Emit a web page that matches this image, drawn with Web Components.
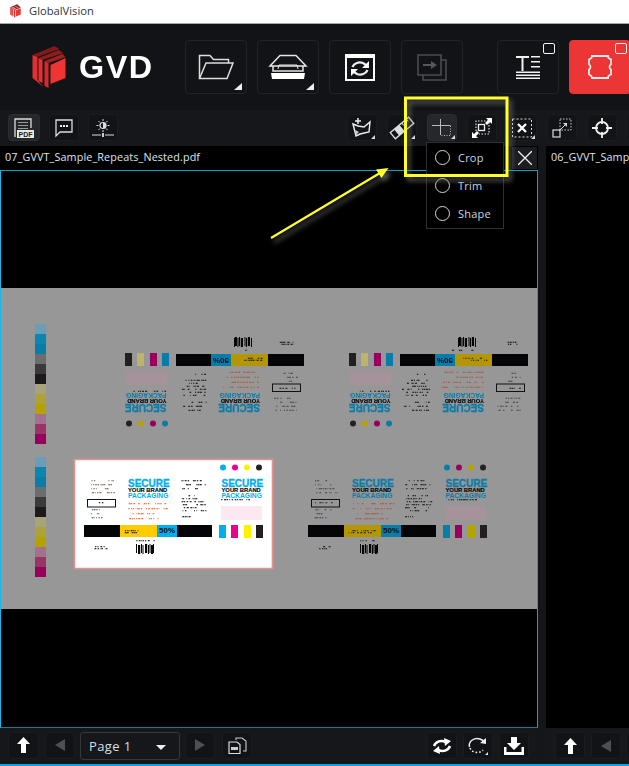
<!DOCTYPE html>
<html>
<head>
<meta charset="utf-8">
<title>GlobalVision</title>
<style>
  html, body { margin: 0; padding: 0; background: #111316; }
  body { width: 629px; height: 766px; overflow: hidden; position: relative; font-family: "Open Sans", "Liberation Sans", sans-serif; }
</style>
</head>
<body>
<gv-title-bar>GlobalVision</gv-title-bar>

<gv-main-bar>
  <gv-tool-button big icon="folder" corner></gv-tool-button>
  <gv-tool-button big icon="scanner" corner></gv-tool-button>
  <gv-tool-button big icon="sync"></gv-tool-button>
  <gv-tool-button big icon="compare" off></gv-tool-button>
  <gv-tool-button big icon="textmode" check style="margin-left:24px"></gv-tool-button>
  <gv-tool-button big icon="graphic" check red></gv-tool-button>
</gv-main-bar>

<gv-tool-bar>
  <gv-tool-button slot="left" icon="pdf" active style="width:32px"></gv-tool-button>
  <gv-tool-button slot="left" icon="chat"></gv-tool-button>
  <gv-tool-button slot="left" icon="bright"></gv-tool-button>
  <gv-tool-button icon="polyadd" tick></gv-tool-button>
  <gv-tool-button icon="ruler" tick></gv-tool-button>
  <gv-tool-button icon="crop" tick active></gv-tool-button>
  <gv-tool-button icon="scale"></gv-tool-button>
  <gv-tool-button icon="xbox" tick></gv-tool-button>
  <gv-tool-button icon="resize"></gv-tool-button>
  <gv-tool-button icon="target"></gv-tool-button>
  <gv-tool-button icon="resize"></gv-tool-button>
</gv-tool-bar>

<gv-workspace>
  <gv-doc-pane closable selected style="width:538px">
    <span slot="name">07_GVVT_Sample_Repeats_Nested.pdf</span>
    <gv-press-sheet>
      <gv-color-strip at="324"></gv-color-strip>
      <gv-color-strip at="457"></gv-color-strip>
      <gv-label x="115" y="322" flip></gv-label>
      <gv-label x="339" y="322" flip></gv-label>
      <gv-label x="298" y="459"></gv-label>
      <gv-label x="74" y="459" live></gv-label>
    </gv-press-sheet>
    <gv-tool-button slot="nav" small icon="up" style="width:31px"></gv-tool-button>
    <gv-tool-button slot="nav" small icon="prev" off style="margin-left:1px"></gv-tool-button>
    <gv-page-select slot="nav">Page 1</gv-page-select>
    <gv-tool-button slot="nav" small icon="next" off></gv-tool-button>
    <gv-tool-button slot="nav" small icon="copy" style="margin-left:2px"></gv-tool-button>
    <gv-tool-button slot="actions" small icon="swap"></gv-tool-button>
    <gv-tool-button slot="actions" small icon="rotate"></gv-tool-button>
    <gv-tool-button slot="actions" small icon="download"></gv-tool-button>
  </gv-doc-pane>
  <gv-doc-pane style="width:83px">
    <span slot="name">06_GVVT_Samp</span>
    <gv-tool-button slot="nav" small icon="up" style="margin-left:1px"></gv-tool-button>
    <gv-tool-button slot="nav" small icon="prev" off style="margin-left:1px"></gv-tool-button>
    <gv-tool-button slot="nav" small icon="next" off></gv-tool-button>
  </gv-doc-pane>
</gv-workspace>

<gv-status-line></gv-status-line>

<gv-crop-menu>
  <gv-crop-option>Crop</gv-crop-option>
  <gv-crop-option>Trim</gv-crop-option>
  <gv-crop-option>Shape</gv-crop-option>
</gv-crop-menu>
<gv-annotation></gv-annotation>

<script>
(function () {
  const LOGO = `
    <path fill="#7e1a1a" d="M0 10 22 1 27 4 5 12Z"/>
    <path fill="#8e1c1c" d="M6 13 26 5 31 8 10 15Z"/>
    <path fill="#a32020" d="M12 16 30 9 33 12 16 18Z"/>
    <path fill="#e23030" d="M0 10 5 12 5 35 11 42 0 33Z"/>
    <path fill="#e83030" d="M6 13 10 15 10 38 6 36Z"/>
    <path fill="#d62a2a" d="M12 16 16 18 16 43 12 41Z"/>
    <path fill="#f03434" d="M18 20 33 13 33 33 18 39Z"/>`;

  const ICONS = {
    folder: [36, 28, `<g fill="none" stroke="#ddd" stroke-width="1.5"><path d="M1.5 25V2.500H12L15.500 6.500H30.500V10"/><path d="M1.500 25.500 8 10H35L29 25.500Z"/></g>`],
    scanner: [38, 26, `<g fill="none" stroke="#e6e6e6" stroke-width="1.5"><path d="M1 12 11 1.500H27L37 12Z"/><path d="M4 12V17H34V12"/><path d="M9 15 10 11H28L29 15" stroke-width="1"/></g><path fill="#fff" d="M2 19H36L35 25H3Z"/>`],
    sync: [30, 27, `<path fill="#fff" d="M0 0H30V27H0ZM2 4V25H28V4Z"/><g fill="none" stroke="#eee" stroke-width="2.200"><path d="M7.500 13C9 9 14 7.500 18 9L21 11"/><path d="M22.500 16C21 20 16 21.500 12 20L9 18"/></g><path fill="#fff" d="M24 7V14H17ZM6 22V15H13Z"/>`],
    compare: [30, 27, `<g fill="none" stroke="#4a4c4e" stroke-width="1.600"><path d="M1 1H24V21H1Z"/><path d="M24 6H29V26H6V21"/></g><path fill="#55585a" d="M6 10H14V7L20 11 14 15V12H6Z"/>`],
    textmode: [24, 24, `<g fill="#f2f2f2"><path d="M0 1H13V3H7.500V16H5.500V3H0Z"/><path d="M15 1H24V2.500H15ZM15 6H24V7.500H15ZM15 11H24V12.500H15ZM0 16.500H24V18H0ZM0 19.500H24V21H0ZM0 22.500H24V24H0Z"/></g>`],
    graphic: [24, 24, `<path fill="none" stroke="#fbe9e9" stroke-width="1.800" d="M4 1H20C20 4 22.500 4 23 4.500V9.500C21 10 21 14 23 14.500V19.500C22 20 20 20 20 23H4C4 20.500 2 20 1 19.500V14.500C3 14 3 10 1 9.500V4.500C2 4 4 3.500 4 1Z"/>`],
    pdf: [20, 20, `<path fill="none" stroke="#ddd" stroke-width="1.300" d="M1 19V1H17V10"/><path stroke="#999" d="M4 4.500H14M4 7.500H14M4 10.500H14"/><rect x="3" y="12" width="17" height="8" fill="#e9e9e9"/><text x="11.500" y="18.600" text-anchor="middle" font-family="Liberation Sans" font-weight="700" font-size="7" fill="#222">PDF</text>`],
    chat: [18, 18, `<path fill="none" stroke="#ddd" stroke-width="1.300" d="M1 1H17V13H5L1 17Z"/><path fill="#eee" d="M5 6H7V8H5ZM8 6H10V8H8ZM11 6H13V8H11Z"/>`],
    bright: [22, 18, `<g stroke="#ddd" fill="none"><circle cx="11" cy="6.500" r="3" stroke-width="1.200"/><path d="M11 0V2M11 11V13M4.500 6.500H6.500M15.500 6.500H17.500M6.500 2 8 3.500M14 9.500 15.500 11M15.500 2 14 3.500M8 9.500 6.500 11"/><path d="M0 16H9M13 16H22"/></g><rect x="10" y="14" width="2" height="4" fill="#ccc"/><path fill="#ddd" d="M11 3.500V9.500A3 3 0 0 0 11 3.500Z"/>`],
    polyadd: [20, 20, `<g fill="none" stroke="#eee" stroke-width="1.400"><path d="M1 6 4 18 8 16 17 14 18 4 12 9 6 8Z"/></g><path stroke="#eee" stroke-width="1.500" d="M6 0V6M3 3H9"/><path fill="#ccc" d="M3 12 7 14 4 17Z"/>`],
    ruler: [24, 20, `<g transform="rotate(-40 12 10)"><rect x="0" y="6" width="24" height="8" fill="none" stroke="#ddd" stroke-width="1.300"/><rect x="5" y="6" width="7" height="8" fill="#ddd"/><path stroke="#ddd" d="M15 6V9M18 6V10M21 6V9"/></g>`],
    crop: [20, 20, `<g stroke="#b8b8b8" fill="none"><path d="M0 7.500H18.500"/><path d="M8.500 1V17"/><path stroke-dasharray="1 1.500" d="M18.500 8V17.500H8.500"/></g>`],
    scale: [20, 20, `<path fill="none" stroke="#ddd" stroke-width="1.200" stroke-dasharray="1.500 1.500" d="M4 13V3H17V16H7"/><rect x="6.500" y="6.500" width="6" height="6" fill="none" stroke="#eee" stroke-width="1.300"/><path fill="#fff" d="M14 0H20V6L18 4 15 7 13 5 16 2ZM0 20V14L2 16 5 13 7 15 4 18 6 20Z"/>`],
    xbox: [20, 20, `<rect x=".5" y="1" width="19" height="18" fill="none" stroke="#ddd" stroke-dasharray="2 2"/><path stroke="#fff" stroke-width="2.300" d="M6 6 14 14M14 6 6 14"/>`],
    resize: [20, 20, `<rect x="8" y="1" width="11" height="11" fill="none" stroke="#ccc" stroke-dasharray="1.500 1.500"/><rect x="1" y="12" width="7" height="7" fill="none" stroke="#ddd" stroke-width="1.200"/><path stroke="#ddd" d="M7 13 14 6"/><path fill="#ddd" d="M11 5H15V9Z"/>`],
    target: [20, 20, `<circle cx="10" cy="10" r="6" fill="none" stroke="#f0f0f0" stroke-width="1.800"/><path stroke="#f0f0f0" stroke-width="1.800" d="M10 0V6M10 14V20M0 10H6M14 10H20"/>`],
    up: [13, 16, `<path fill="#fff" d="M6.500 0 13 7H9V16H4V7H0Z"/>`],
    prev: [10, 12, `<path fill="#4d4f52" d="M10 0V12L0 6Z"/>`],
    next: [10, 12, `<path fill="#4d4f52" d="M0 0V12L10 6Z"/>`],
    copy: [19, 17, `<g fill="none" stroke="#ccc" stroke-width="1.100"><path d="M8 3V1H14L18 4V14H15"/></g><path fill="#111316" stroke="#ddd" stroke-width="1.200" d="M1 5H9L12 7.500V16.500H1Z"/><rect x="3" y="10" width="7" height="3" fill="#ccc"/>`],
    swap: [20, 16, `<g fill="none" stroke="#fff" stroke-width="2.600"><path d="M2 8C4 3 9 2 14 4"/><path d="M18 8C16 13 11 14 6 12"/></g><path fill="#fff" d="M12 0 19 3 13 8ZM8 16 1 13 7 8Z"/>`],
    rotate: [20, 18, `<path fill="none" stroke="#eee" stroke-width="1.500" d="M1.500 10C0 4 7 0 12 2L16 4"/><path fill="none" stroke="#eee" stroke-width="1.600" stroke-dasharray="1.600 2" d="M2 11C4 16 12 17 15 13"/><path fill="#eee" d="M18 1V7L12 6ZM20 15V18H17Z"/>`],
    download: [20, 18, `<path fill="#fff" d="M7 0H13V6H17L10 13 3 6H7ZM0 10H2.500V15H17.500V10H20V18H0Z"/>`]
  };

  const hostBox = (extra) => `<style>:host { display: flex; box-sizing: border-box; ${extra} }</style>`;

  class GvTitleBar extends HTMLElement {
    constructor() {
      super();
      const shadow = this.attachShadow({ mode: "open" });
      shadow.innerHTML = `
        <style>
          :host { display: flex; align-items: center; box-sizing: border-box; height: 24px; background: #fff; border-bottom: 1px solid #a8a8a8; padding: 0 0 2px 10px; font: 11.200px "Open Sans", sans-serif; color: #2c3440; }
          svg { width: 11px; height: 14px; margin-right: 8px; }
        </style>
        <svg viewBox="0 0 33 44">${LOGO}</svg><slot></slot>`;
    }
  }

  class GvMainBar extends HTMLElement {
    constructor() {
      super();
      const shadow = this.attachShadow({ mode: "open" });
      shadow.innerHTML = `
        <style>
          :host { display: flex; align-items: center; box-sizing: border-box; height: 86px; background: #111316; padding-left: 32px; overflow: hidden; }
          .logo { display: flex; align-items: center; width: 153px; flex: none; }
          svg { width: 34px; height: 44px; }
          b { font: 700 30.500px "Liberation Sans", sans-serif; letter-spacing: 1.400px; color: #fff; margin-left: 13px; transform: scaleX(1.060); transform-origin: left; }
          .btns { display: flex; gap: 10px; flex: none; }
        </style>
        <div class="logo"><svg viewBox="0 0 33 44">${LOGO}</svg><b>GVD</b></div>
        <div class="btns"><slot></slot></div>`;
    }
  }

  class GvToolBar extends HTMLElement {
    constructor() {
      super();
      const shadow = this.attachShadow({ mode: "open" });
      shadow.innerHTML = `
        <style>
          :host { display: flex; box-sizing: border-box; height: 36px; background: #15171a; padding: 4px 0 0 8px; overflow: hidden; }
          .grp { display: flex; gap: 9px; flex: none; }
          .right { gap: 10px; margin-left: 229px; }
        </style>
        <div class="grp"><slot name="left"></slot></div>
        <div class="grp right"><slot></slot></div>`;
    }
  }

  class GvToolButton extends HTMLElement {
    constructor() {
      super();
      this.attachShadow({ mode: "open" });
    }
    connectedCallback() {
      const [w, h, body] = ICONS[this.getAttribute("icon")];
      this.shadowRoot.innerHTML = `
        <style>
          :host { display: flex; align-items: center; justify-content: center; flex: none; position: relative; box-sizing: border-box; width: 30px; height: 27px; background: #111316; border: 1px solid #1a1c20; border-radius: 4px; }
          :host([active]) { background: #25272b; border-color: #2a2c30; }
          :host([big]) { width: 62px; height: 54px; border: 1.500px solid #212327; }
          :host([red]) { background: #ec3535; border-color: #ec3535; }
          svg { display: block; overflow: visible; }
          .corner { position: absolute; right: 4px; bottom: 3px; border-style: solid; border-width: 0 0 7px 8px; border-color: transparent transparent #eee transparent; }
          .tick { position: absolute; right: 1px; bottom: 1px; border-style: solid; border-width: 0 0 4px 4px; border-color: transparent transparent #ddd transparent; }
          .check { position: absolute; right: 3px; top: 2px; width: 10px; height: 9px; border: 1.200px solid #f4f4f4; border-radius: 2px; }
        </style>
        <svg width="${w}" height="${h}" viewBox="0 0 ${w} ${h}">${body}</svg>
        ${this.hasAttribute("corner") ? '<i class="corner"></i>' : ""}
        ${this.hasAttribute("tick") ? '<i class="tick"></i>' : ""}
        ${this.hasAttribute("check") ? '<i class="check"></i>' : ""}`;
    }
  }

  class GvWorkspace extends HTMLElement {
    constructor() {
      super();
      const shadow = this.attachShadow({ mode: "open" });
      shadow.innerHTML = hostBox("height: 618px; gap: 8px; background: #14161a; overflow: hidden;") + `<slot></slot>`;
    }
  }

  class GvDocPane extends HTMLElement {
    constructor() {
      super();
      const shadow = this.attachShadow({ mode: "open" });
      shadow.innerHTML = `
        <style>
          :host { display: flex; flex-direction: column; flex: none; box-sizing: border-box; overflow: hidden; }
          .tab { display: flex; align-items: center; justify-content: space-between; box-sizing: border-box; height: 24px; background: #000; padding: 0 1px 1px 5px; font: 10.800px/22px "Open Sans", sans-serif; letter-spacing: .12px; color: #dbe4ee; white-space: nowrap; }
          .tab ::slotted(span) { position: relative; top: -1px; }
          .x { display: none; align-items: center; justify-content: center; width: 25px; height: 22px; background: #1b1d21; }
          :host([closable]) .x { display: flex; }
          .view { flex: 1; background: #000; min-height: 0; position: relative; }
          :host([selected]) .view { border: 1px solid #12a0c4; border-left-color: #17b7ea; border-bottom-color: #0f7e96; }
          .foot { display: flex; align-items: center; box-sizing: border-box; height: 36px; background: #15171a; padding: 0 0 1px 8px; }
          .nav, .act { display: flex; gap: 5px; flex: none; }
          .act { gap: 6px; margin-left: auto; margin-right: 9px; }
        </style>
        <div class="tab"><slot name="name"></slot>
          <span class="x"><svg width="14" height="14" viewBox="0 0 14 14"><path stroke="#eee" stroke-width="1.300" d="M0 0 14 14M14 0 0 14"/></svg></span>
        </div>
        <div class="view"><slot></slot></div>
        <div class="foot">
          <div class="nav"><slot name="nav"></slot></div>
          <div class="act"><slot name="actions"></slot></div>
        </div>`;
    }
  }

  class GvPressSheet extends HTMLElement {
    constructor() {
      super();
      const shadow = this.attachShadow({ mode: "open" });
      shadow.innerHTML = `
        <style>
          :host { display: block; position: absolute; left: 0; right: 0; top: 117px; height: 321px; background: #979797; }
        </style>
        <slot></slot>`;
    }
  }

  // colour control strip down the side of the sheet
  class GvColorStrip extends HTMLElement {
    constructor() {
      super();
      this.attachShadow({ mode: "open" });
    }
    connectedCallback() {
      const cols = ["#6a9eb8", "#0a86b0", "#0a7ca8", "#6b6d6f", "#3a3a3b", "#1c1a1a", "#a8a47a", "#aca238", "#b3a200", "#a56f90", "#983468", "#98005c"];
      const top = +this.getAttribute("at") - 288;
      this.shadowRoot.innerHTML = `
        <style>
          :host { display: flex; flex-direction: column; position: absolute; left: 34px; top: ${top}px; width: 11px; }
          i { display: block; height: 10px; }
        </style>
        ${cols.map((c) => `<i style="background:${c}"></i>`).join("")}`;
    }
  }

  function speckle(rnd, x, y, w, h, color, step, keep) {
    let out = "";
    for (let row = y; row < y + h; row += step) {
      let cx = x + rnd() * 2;
      const end = x + w * (0.6 + rnd() * 0.4);
      while (cx < end) {
        const seg = 0.6 + rnd() * 1.6;
        if (rnd() < keep) {
          out += `<rect x="${cx.toFixed(1)}" y="${row}" width="${seg.toFixed(1)}" height="1.300" fill="${color}"/>`;
        }
        cx += seg + rnd() * 1.6;
      }
    }
    return out;
  }

  class GvLabel extends HTMLElement {
    constructor() {
      super();
      this.attachShadow({ mode: "open" });
    }
    connectedCallback() {
      const live = this.hasAttribute("live");
      const flip = this.hasAttribute("flip");
      const x = +this.getAttribute("x") - 1;
      const y = +this.getAttribute("y") - 288;
      const c = live
        ? { cy: "#00aeef", mg: "#ec008c", yl: "#fff200", bar: "#ffcc00", k: "#050508", pk: "#fbe8f0", or: "#f4743a", ink: "#333" }
        : { cy: "#0a7ca8", mg: "#980060", yl: flip ? "#bcb46c" : "#b3a400", bar: "#b39600", k: "#050508", pk: "#a5929a", or: "#a8604a", ink: "#2a2a2a" };
      let seed = x * 7 + y * 13 + 5;
      const rnd = () => {
        seed = (seed * 9301 + 49297) % 233280;
        return seed / 233280;
      };
      const brand = (left) => `
        <div class="brand" style="left:${left}px">
          <div class="l1">SECURE</div>
          <div class="l2">YOUR BRAND</div>
          <div class="l3">PACKAGING</div>
        </div>`;
      let bars = "";
      [62, 64, 67, 68.500, 71, 74, 75.500, 77, 79].forEach((bx, i) => {
        bars += `<rect x="${bx}" y="${85 + (i % 2)}" width="${i % 3 === 1 ? 2.200 : 1}" height="9" fill="${c.k}"/>`;
      });
      this.shadowRoot.innerHTML = `
        <style>
          :host { display: block; position: absolute; left: ${x}px; top: ${y}px; width: 199px; height: 110px; ${flip ? "transform: rotate(180deg);" : ""} ${live ? "background: #fff; box-shadow: inset 0 0 0 1.300px #e88f8f, 0 0 1px #bbb;" : ""} }
          svg { display: block; }
          .soft { filter: blur(.3px); }
          .brand { position: absolute; top: 21px; width: 42px; font-family: "Liberation Sans", sans-serif; font-weight: 700; white-space: nowrap; color: ${c.cy}; }
          .l1 { height: 7.500px; font-size: 10px; line-height: 7.500px; -webkit-text-stroke: .3px ${c.cy}; }
          .l2 { height: 5.200px; font-size: 5.800px; line-height: 5.200px; color: ${c.k}; -webkit-text-stroke: .15px ${c.k}; }
          .l3 { height: 5.600px; font-size: 6.700px; line-height: 5.600px; }
          .pct { position: absolute; left: 83px; top: 67px; width: 20px; height: 10px; text-align: center; font: 700 8px/10px "Liberation Sans", sans-serif; color: #111; }
        </style>
        <svg width="199" height="110" viewBox="0 0 199 110">
          <circle cx="149" cy="8.500" r="3" fill="${c.cy}"/>
          <circle cx="161" cy="8.500" r="3" fill="${c.mg}"/>
          <circle cx="173" cy="8.500" r="3" fill="${live ? c.yl : "#b3a400"}"/>
          <circle cx="185" cy="8.500" r="3" fill="#222"/>
          <rect x="147" y="47" width="41" height="14" fill="${c.pk}"/>
          <rect x="10" y="66" width="128" height="12" fill="${c.k}"/>
          <rect x="46" y="66" width="37" height="12" fill="${c.bar}"/>
          <rect x="83" y="66" width="20" height="12" fill="${c.cy}"/>
          <rect x="145" y="66" width="7" height="13" fill="${c.cy}"/>
          <rect x="157" y="66" width="7" height="13" fill="${c.mg}"/>
          <rect x="170" y="66" width="7" height="13" fill="${c.yl}"/>
          <rect x="182" y="66" width="7" height="13" fill="#231f20"/>
          <rect x="13.500" y="40.500" width="28" height="7.500" fill="none" stroke="#111" stroke-width="1"/>
          ${bars}
          <g class="soft">
            ${speckle(rnd, 50, 71, 26, 3, "#333", 2, 0.7)}
            ${speckle(rnd, 16, 43, 22, 2, "#333", 3, 0.7)}
            ${speckle(rnd, 54, 44, 43, 16, c.or, 5, 0.7)}
            ${speckle(rnd, 107, 21, 28, 9, c.ink, 4, 0.65)}
            ${speckle(rnd, 107, 36, 28, 16, c.ink, 3, 0.6)}
            ${speckle(rnd, 107, 57, 14, 3, c.ink, 3, 0.7)}
            ${speckle(rnd, 17, 21, 25, 14, live ? "#8a7a68" : "#5a5450", 4, 0.6)}
            ${speckle(rnd, 16, 50, 18, 12, live ? "#5a7a98" : "#4a5460", 4, 0.6)}
            ${speckle(rnd, 147, 40, 41, 2, c.ink, 2, 0.7)}
            ${speckle(rnd, 20, 87, 15, 4, c.ink, 2, 0.8)}
            ${speckle(rnd, 62, 81, 24, 1, c.ink, 2, 0.5)}
          </g>
        </svg>
        ${brand(54)}${brand(147.500)}
        <div class="pct">50%</div>`;
    }
  }

  class GvPageSelect extends HTMLElement {
    constructor() {
      super();
      const shadow = this.attachShadow({ mode: "open" });
      shadow.innerHTML = `
        <style>
          :host { display: flex; align-items: center; justify-content: space-between; box-sizing: border-box; width: 100px; height: 28px; background: #15171a; border: 1px solid #35373b; border-radius: 3px; padding: 0 13px 0 8px; font: 13px "Open Sans", sans-serif; letter-spacing: .4px; color: #d5dfe8; }
          i { border-style: solid; border-width: 5px 5px 0 5px; border-color: #eee transparent transparent transparent; margin-top: 3px; }
        </style>
        <slot></slot><i></i>`;
    }
  }

  class GvStatusLine extends HTMLElement {
    constructor() {
      super();
      const shadow = this.attachShadow({ mode: "open" });
      shadow.innerHTML = hostBox("height: 2px; background: #0da3e0;");
    }
  }

  class GvCropMenu extends HTMLElement {
    constructor() {
      super();
      const shadow = this.attachShadow({ mode: "open" });
      shadow.innerHTML = `
        <style>
          :host { display: flex; flex-direction: column; position: absolute; left: 426px; top: 142px; box-sizing: border-box; width: 78px; height: 87px; background: #000; border: 1px solid #2e3034; }
        </style>
        <slot></slot>`;
    }
  }

  class GvCropOption extends HTMLElement {
    constructor() {
      super();
      const shadow = this.attachShadow({ mode: "open" });
      shadow.innerHTML = `
        <style>
          :host { display: flex; align-items: center; box-sizing: border-box; height: 28.500px; padding-left: 8px; font: 11px "Open Sans", sans-serif; letter-spacing: .2px; color: #c6d6e6; }
          i { width: 13px; height: 13px; border: 1.200px solid #d4d4d4; border-radius: 50%; margin-right: 8px; flex: none; }
        </style>
        <i></i><slot></slot>`;
    }
  }

  class GvAnnotation extends HTMLElement {
    constructor() {
      super();
      const shadow = this.attachShadow({ mode: "open" });
      shadow.innerHTML = `
        <style>
          :host { display: block; position: absolute; left: 0; top: 0; width: 629px; height: 766px; pointer-events: none; }
          svg { display: block; filter: drop-shadow(3px 4px 2.500px rgba(125,125,125,.75)); }
        </style>
        <svg width="629" height="766" viewBox="0 0 629 766">
          <rect x="405.500" y="98" width="101.500" height="77.500" fill="none" stroke="#ffff30" stroke-width="3"/>
          <path stroke="#ffff30" stroke-width="2.200" d="M271 238 380 173"/>
          <path fill="#ffff30" d="M388.500 168 376 169.500 381.500 178Z"/>
        </svg>`;
    }
  }

  customElements.define("gv-title-bar", GvTitleBar);
  customElements.define("gv-main-bar", GvMainBar);
  customElements.define("gv-tool-bar", GvToolBar);
  customElements.define("gv-tool-button", GvToolButton);
  customElements.define("gv-workspace", GvWorkspace);
  customElements.define("gv-doc-pane", GvDocPane);
  customElements.define("gv-press-sheet", GvPressSheet);
  customElements.define("gv-color-strip", GvColorStrip);
  customElements.define("gv-label", GvLabel);
  customElements.define("gv-page-select", GvPageSelect);
  customElements.define("gv-status-line", GvStatusLine);
  customElements.define("gv-crop-menu", GvCropMenu);
  customElements.define("gv-crop-option", GvCropOption);
  customElements.define("gv-annotation", GvAnnotation);
})();
</script>
</body>
</html>
